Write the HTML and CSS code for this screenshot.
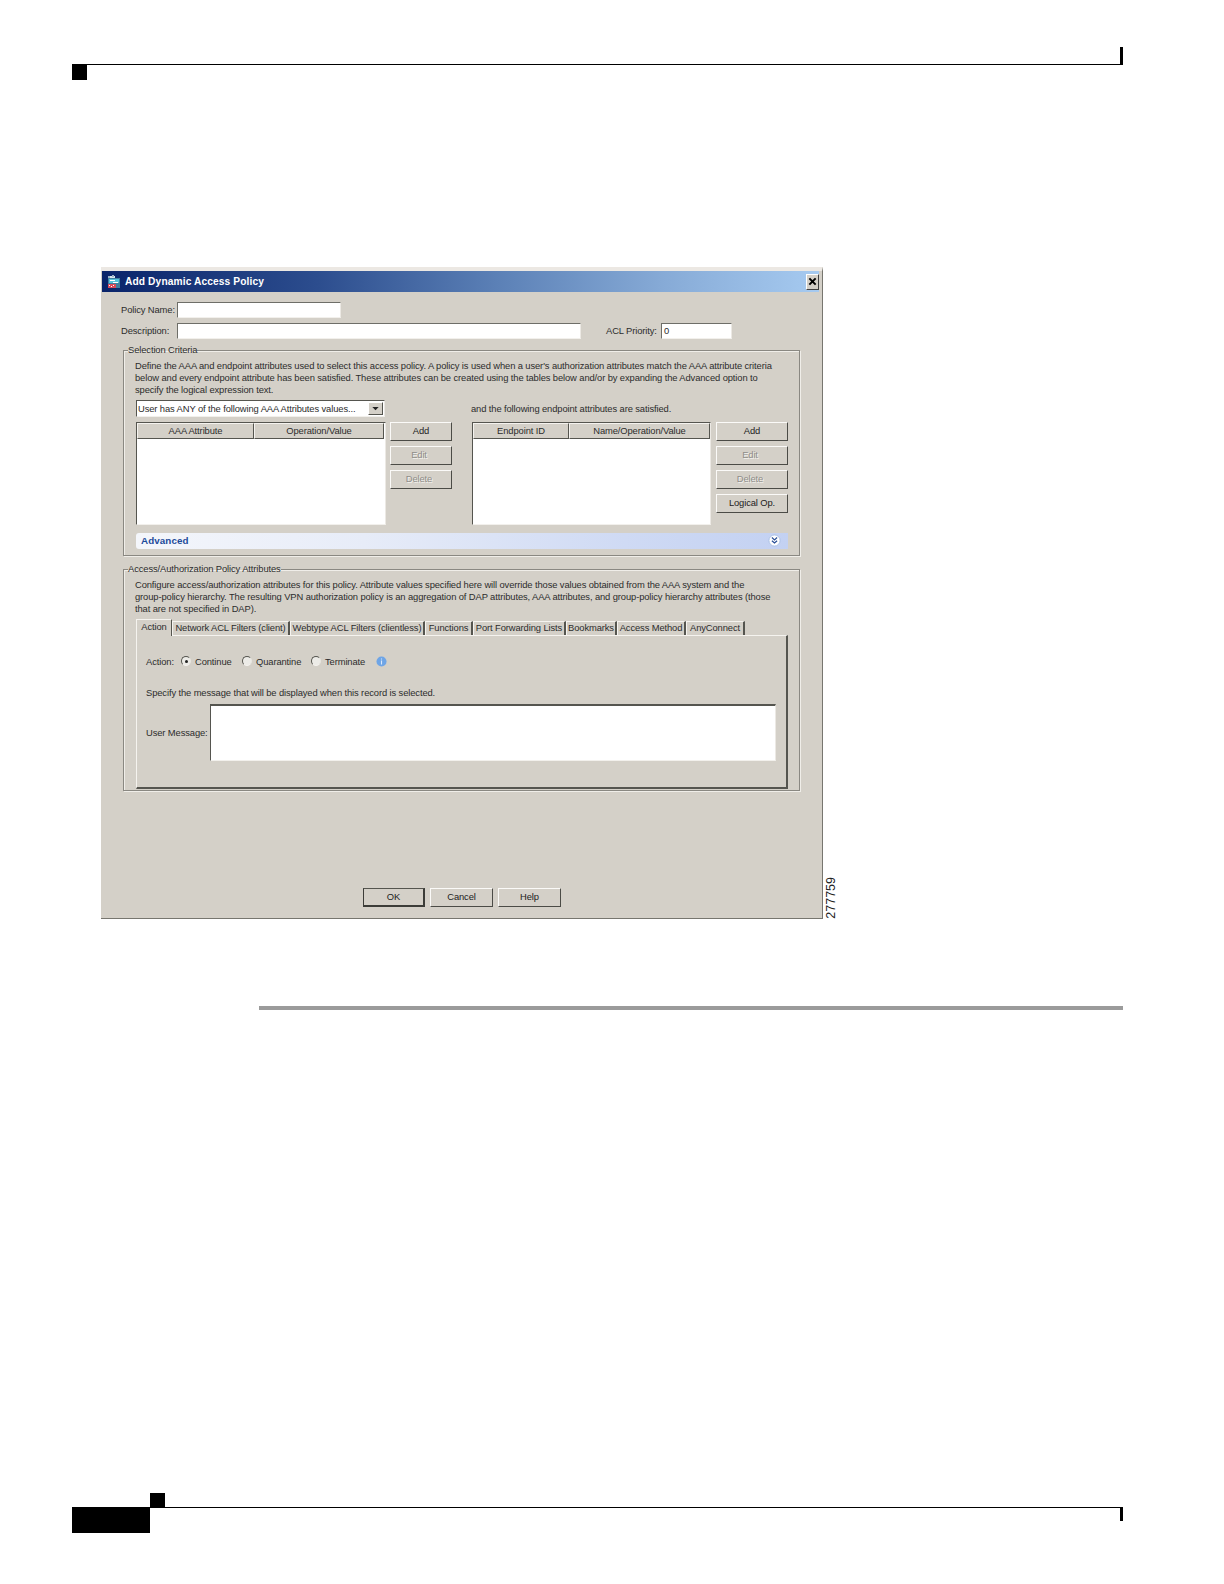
FILE: index.html
```html
<!DOCTYPE html>
<html lang="en">
<head>
<meta charset="utf-8">
<title>Add Dynamic Access Policy</title>
<link rel="stylesheet" href="styles.css">
</head>
<body>
<div class="page">
  <header class="top-bar"><span class="tick"></span></header>
  <div class="top-square"></div>

  <div class="figure">
    <section class="dialog">
      <div class="titlebar">
        <svg class="title-icon" viewBox="0 0 14 14" aria-hidden="true">
          <rect x="1" y="3" width="12" height="10" fill="#3f7f9f"/>
          <rect x="2" y="1" width="6" height="2" fill="#d8e4ec"/>
          <path d="M1 1h2v2H1zM5 0h2v2H5z" fill="#9fb4c4"/>
          <rect x="2" y="4" width="10" height="4" fill="#58c4dc"/>
          <path d="M3 5h5v1H3zM6 7h5v1H6z" fill="#ffffff"/>
          <rect x="1" y="9" width="8" height="4" fill="#d84a5a"/>
          <path d="M2 10h1v1H2zM4 11h1v1H4zM6 10h1v1H6z" fill="#ffffff"/>
        </svg>
        <span class="title-text">Add Dynamic Access Policy</span>
        <span class="close">
          <svg viewBox="0 0 10 10" aria-hidden="true"><path d="M1.5 1.5l7 7M8.5 1.5l-7 7" stroke="#000" stroke-width="2.2" fill="none"/></svg>
        </span>
      </div>

      <div class="body">
        <div class="row row-name">
          <label class="lbl-name">Policy Name:</label>
          <span class="input input-name"></span>
        </div>
        <div class="row row-desc">
          <label class="lbl-name">Description:</label>
          <span class="input input-desc"></span>
          <label class="lbl-acl">ACL Priority:</label>
          <span class="input input-acl">0</span>
        </div>

        <fieldset class="group group-sel">
          <legend>Selection Criteria</legend>
          <p class="para">Define the AAA and endpoint attributes used to select this access policy. A policy is used when a user's authorization attributes match the AAA attribute criteria<br>below and every endpoint attribute has been satisfied. These attributes can be created using the tables below and/or by expanding the Advanced option to<br>specify the logical expression text.</p>
          <div class="select-row">
            <div class="select">
              <span class="select-text">User has ANY of the following AAA Attributes values...</span>
              <span class="select-btn"><svg viewBox="0 0 8 5" aria-hidden="true"><path d="M0 0h8L4 4z" fill="#222"/></svg></span>
            </div>
            <span class="select-after">and the following endpoint attributes are satisfied.</span>
          </div>
          <div class="tables">
            <div class="table table-a">
              <div class="thead"><span class="th th-a1">AAA Attribute</span><span class="th th-a2">Operation/Value</span></div>
            </div>
            <div class="btns btns-a">
              <span class="btn">Add</span>
              <span class="btn off">Edit</span>
              <span class="btn off">Delete</span>
            </div>
            <div class="table table-b">
              <div class="thead"><span class="th th-b1">Endpoint ID</span><span class="th th-b2">Name/Operation/Value</span></div>
            </div>
            <div class="btns btns-b">
              <span class="btn">Add</span>
              <span class="btn off">Edit</span>
              <span class="btn off">Delete</span>
              <span class="btn">Logical Op.</span>
            </div>
          </div>
          <div class="advanced">
            <span class="adv-text">Advanced</span>
            <svg class="adv-icon" viewBox="0 0 14 14" aria-hidden="true">
              <circle cx="7" cy="7" r="6" fill="#fff" stroke="#a9bfe4"/>
              <path d="M4.2 3.8L7 6.3l2.8-2.5M4.2 7.2L7 9.7l2.8-2.5" fill="none" stroke="#2a4f96" stroke-width="1.3"/>
            </svg>
          </div>
        </fieldset>

        <fieldset class="group group-acc">
          <legend>Access/Authorization Policy Attributes</legend>
          <p class="para">Configure access/authorization attributes for this policy. Attribute values specified here will override those values obtained from the AAA system and the<br>group-policy hierarchy. The resulting VPN authorization policy is an aggregation of DAP attributes, AAA attributes, and group-policy hierarchy attributes (those<br>that are not specified in DAP).</p>
          <div class="tabs">
            <span class="tab tab-action active">Action</span>
            <span class="tab tab-net">Network ACL Filters (client)</span>
            <span class="tab tab-web">Webtype ACL Filters (clientless)</span>
            <span class="tab tab-fun">Functions</span>
            <span class="tab tab-port">Port Forwarding Lists</span>
            <span class="tab tab-book">Bookmarks</span>
            <span class="tab tab-acc">Access Method</span>
            <span class="tab tab-any">AnyConnect</span>
          </div>
          <div class="panel">
            <div class="action-row">
              <span class="act-label">Action:</span>
              <span class="radio checked"></span><span class="opt opt-cont">Continue</span>
              <span class="radio"></span><span class="opt opt-quar">Quarantine</span>
              <span class="radio"></span><span class="opt opt-term">Terminate</span>
              <svg class="info" viewBox="0 0 12 12" aria-hidden="true">
                <circle cx="6" cy="6" r="5.5" fill="#6fa5e6"/>
                <path d="M5.4 2.6h1.2v1.2H5.4zM5.4 5h1.2v4.2H5.4z" fill="#dbe9fa"/>
              </svg>
            </div>
            <p class="specify">Specify the message that will be displayed when this record is selected.</p>
            <div class="msg-row">
              <span class="msg-label">User Message:</span>
              <span class="textarea"></span>
            </div>
          </div>
        </fieldset>

        <div class="actions">
          <span class="btn btn-main btn-default">OK</span>
          <span class="btn btn-main">Cancel</span>
          <span class="btn btn-main">Help</span>
        </div>
      </div>
    </section>
    <span class="fig-num">277759</span>
  </div>

  <div class="end-rule"></div>

  <footer class="bottom">
    <div class="bottom-block"></div>
    <div class="bottom-right">
      <div class="bottom-upper"><span class="bottom-square"></span></div>
      <div class="bottom-lower"><span class="tick tick-low"></span></div>
    </div>
  </footer>
</div>
</body>
</html>
```
FILE: styles.css
```css
* { box-sizing: border-box; }
html, body { margin: 0; padding: 0; background: #fff; }
.page {
  width: 1224px;
  height: 1584px;
  padding: 47px 101px 0 72px;
  overflow: hidden;
  font-family: "Liberation Sans", Arial, sans-serif;
}

/* running header */
.top-bar {
  height: 18px;
  border-bottom: 1px solid #000;
  display: flex;
  justify-content: flex-end;
}
.tick { display: block; width: 3px; height: 17px; background: #000; }
.top-square { width: 15px; height: 15px; background: #000; }

/* figure */
.figure {
  display: flex;
  align-items: flex-end;
  margin: 187px 0 0 29px;
}
.fig-num {
  writing-mode: vertical-rl;
  transform: rotate(180deg);
  font-size: 12.5px;
  line-height: 14px;
  color: #222;
  margin-left: 1px;
}
.dialog {
  width: 722px;
  height: 652px;
  background: #d4d0c8;
  border-top: 4px solid #ece8e3;
  border-right: 1px solid #77766f;
  border-bottom: 1px solid #77766f;
  display: flex;
  flex-direction: column;
  font-size: 9.4px;
  letter-spacing: -.11px;
  color: #2c2c2c;
}

/* title bar */
.titlebar {
  height: 21px;
  margin-left: 1px;
  margin-right: 3px;
  padding: 0 0 0 5px;
  background: linear-gradient(90deg, #0a246a 0%, #2c4d8e 30%, #5b80b6 55%, #86aad6 78%, #a6caf0 100%);
  display: flex;
  align-items: center;
}
.title-icon { width: 14px; height: 14px; }
.title-text {
  margin-left: 4px;
  flex: 1;
  color: #fff;
  font-weight: bold;
  font-size: 10.2px;
  letter-spacing: .12px;
}
.close {
  width: 13px;
  height: 16px;
  background: #d4d0c8;
  border: 1px solid;
  border-color: #fff #404040 #404040 #fff;
  display: flex;
  align-items: center;
  justify-content: center;
}
.close svg { width: 9px; height: 9px; }

/* form */
.body {
  flex: 1;
  display: flex;
  flex-direction: column;
  padding-left: 20px;
}
.row { display: flex; align-items: center; height: 16px; }
.row-name { margin-top: 10px; }
.row-desc { margin-top: 5px; }
.lbl-name { width: 56px; margin-bottom: 2px; white-space: nowrap; }
.lbl-acl { width: 55px; margin-left: 25px; margin-bottom: 2px; white-space: nowrap; }
.input {
  display: block;
  height: 16px;
  background: #fff;
  border: 1px solid;
  border-color: #6e6e68 #ece9e4 #f2f0ec #6e6e68;
  line-height: 14px;
  padding-left: 2px;
}
.input-name { width: 164px; }
.input-desc { width: 404px; }
.input-acl { width: 71px; }

/* group boxes */
.group {
  margin: 0 0 0 2px;
  width: 677px;
  padding: 0 11px 0 12px;
  border: 1px solid #8a8882;
  box-shadow: 1px 1px 0 #f0eee9, inset 1px 1px 0 #f0eee9;
  min-width: 0;
}
.group legend {
  padding: 0;
  margin-left: -8px;
  line-height: 12px;
  white-space: nowrap;
}
.group-sel { margin-top: 5px; height: 212px; }
.group-acc { margin-top: 7px; height: 228px; }
.para { margin: 4px 0 0 -1px; line-height: 12px; white-space: nowrap; }

.select-row { display: flex; align-items: center; margin-top: 4px; height: 17px; }
.select {
  width: 249px;
  height: 17px;
  background: #fff;
  border: 1px solid;
  border-color: #55554f #ece9e4 #f2f0ec #55554f;
  display: flex;
  align-items: center;
  padding-left: 1px;
}
.select-text { flex: 1; white-space: nowrap; }
.select-btn {
  width: 15px;
  height: 13px;
  margin-right: 1px;
  background: #d4d0c8;
  border: 1px solid;
  border-color: #fff #55554f #55554f #fff;
  display: flex;
  align-items: center;
  justify-content: center;
}
.select-btn svg { width: 7px; height: 4px; }
.select-after { margin-left: 86px; white-space: nowrap; }

.tables { display: flex; margin-top: 5px; height: 103px; }
.table {
  background: #fff;
  border: 1px solid;
  border-color: #55554f #ece9e4 #f2f0ec #55554f;
}
.table-a { width: 250px; }
.table-b { width: 239px; margin-left: 20px; }
.thead { display: flex; height: 16px; }
.th {
  height: 16px;
  background: #d4d0c8;
  border: 1px solid;
  border-color: #f5f3ef #55554f #55554f #f5f3ef;
  text-align: center;
  line-height: 14px;
  white-space: nowrap;
}
.th-a1 { width: 117px; }
.th-a2 { width: 130px; }
.th-b1 { width: 96px; }
.th-b2 { width: 141px; }

.btns { display: flex; flex-direction: column; gap: 5px; margin-left: 4px; }
.btns-a { width: 62px; }
.btns-b { width: 72px; margin-left: 5px; }
.btn {
  display: block;
  height: 19px;
  background: #d4d0c8;
  border: 1px solid;
  border-color: #fbfaf8 #4b4b46 #4b4b46 #fbfaf8;
  text-align: center;
  line-height: 16px;
  white-space: nowrap;
  color: #222;
}
.btn.off { color: #8f8d88; text-shadow: 1px 1px 0 #f3f1ed; padding-right: 4px; }

.advanced {
  margin-top: 8px;
  height: 16px;
  border-radius: 3px 0 0 3px;
  background: linear-gradient(90deg, #f4f6fb 0%, #e7ecf8 35%, #cfdaf4 75%, #c3d1f2 100%);
  display: flex;
  align-items: center;
  justify-content: space-between;
  padding: 0 7px 1px 5px;
}
.adv-text { font-weight: bold; font-size: 9.8px; color: #1c4a9a; letter-spacing: .1px; }
.adv-icon { width: 13px; height: 13px; }

/* tabs */
.tabs { display: flex; margin-top: 6px; height: 14px; align-items: flex-end; }
.tab {
  display: block;
  height: 14px;
  line-height: 12px;
  text-align: center;
  white-space: nowrap;
  border-left: 1px solid #f5f3ef;
  border-top: 1px solid #f5f3ef;
  border-right: 2px solid #55554f;
  background: #d4d0c8;
}
.tab.active {
  height: 17px;
  line-height: 13px;
  border-right-width: 1px;
  position: relative;
  z-index: 1;
  margin-bottom: -1px;
}
.tab-action { width: 36px; }
.tab-net { width: 118px; }
.tab-web { width: 135px; }
.tab-fun { width: 48px; }
.tab-port { width: 93px; }
.tab-book { width: 51px; }
.tab-acc { width: 69px; }
.tab-any { width: 59px; }

.panel {
  height: 154px;
  border: 1px solid;
  border-color: #f5f3ef #55554f #55554f #f5f3ef;
  border-right-width: 2px;
  border-bottom-width: 2px;
  padding-left: 9px;
}
.action-row { display: flex; align-items: center; height: 14px; margin-top: 18px; }
.act-label { width: 35px; }
.radio {
  width: 10px;
  height: 10px;
  border-radius: 50%;
  background: #ecebe7;
  border: 1px solid;
  border-color: #55554f #e8e6e1 #f5f3ef #55554f;
  position: relative;
  flex: none;
}
.radio.checked::after {
  content: "";
  position: absolute;
  left: 2.5px;
  top: 2.5px;
  width: 3px;
  height: 3px;
  border-radius: 50%;
  background: #222;
}
.opt { margin-left: 4px; white-space: nowrap; }
.opt-cont { width: 47px; }
.opt-quar { width: 55px; }
.opt-term { width: 51px; }
.info { width: 11px; height: 11px; }

.specify { margin: 19px 0 0; line-height: 12px; white-space: nowrap; }
.msg-row { display: flex; align-items: center; margin-top: 5px; }
.msg-label { width: 64px; white-space: nowrap; }
.textarea {
  display: block;
  width: 566px;
  height: 57px;
  background: #fff;
  border: 1px solid;
  border-color: #55554f #ece9e4 #f2f0ec #55554f;
  border-top-width: 2px;
}

/* bottom buttons */
.actions {
  margin-top: auto;
  margin-bottom: 11px;
  margin-left: 242px;
  display: flex;
  gap: 5px;
}
.btn-main { width: 63px; }
.btn-default { width: 62px; border: 1px solid #3c3c38; border-top-color: #55554f; border-bottom-width: 2px; border-right-width: 2px; }

/* closing rule */
.end-rule {
  height: 4px;
  margin: 87px 0 0 187px;
  background: #9b9b9b;
}

/* running footer */
.bottom { display: flex; margin-top: 483px; }
.bottom-block { width: 78px; height: 26px; align-self: flex-end; background: #000; }
.bottom-right { flex: 1; display: flex; flex-direction: column; }
.bottom-upper { height: 15px; border-bottom: 1px solid #000; }
.bottom-square { display: block; width: 15px; height: 14px; background: #000; }
.bottom-lower { display: flex; justify-content: flex-end; height: 25px; }
.tick-low { height: 13px; }
```
